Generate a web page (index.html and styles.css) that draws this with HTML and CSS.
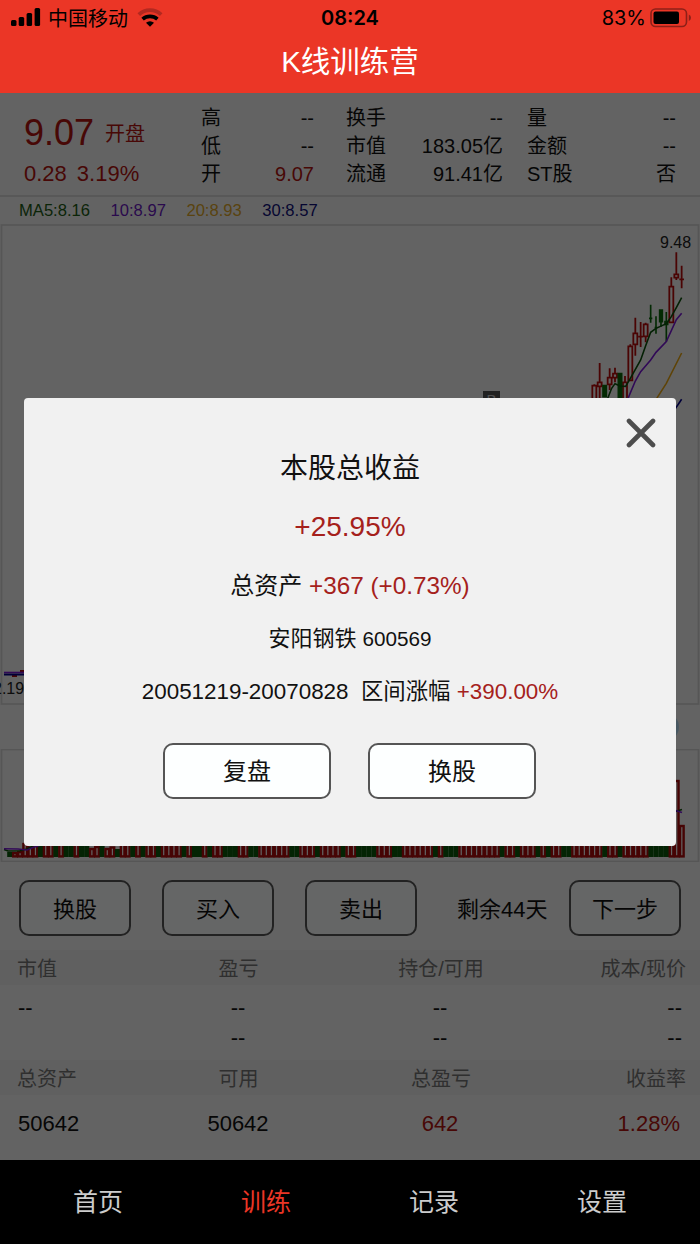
FILE: index.html
```html
<!DOCTYPE html>
<html lang="zh-CN">
<head>
    <meta charset="UTF-8">
    <title>K线训练营</title>
    <link rel="stylesheet" href="styles.css">
</head>
<body>
<div class="app">
    <div class="top">
        <div class="status">
            <div class="carrier">
                <svg width="30" height="20" viewBox="0 0 30 20">
                    <rect x="0" y="12" width="5.5" height="6" rx="1.5"/>
                    <rect x="7.7" y="9" width="5.5" height="9" rx="1.5"/>
                    <rect x="15.6" y="5" width="5.5" height="13" rx="1.5"/>
                    <rect x="23.6" y="0" width="5.5" height="18" rx="1.5"/>
                </svg>
                <span>中国移动</span>
                <svg class="wifi" width="26" height="20" viewBox="0 0 26 20">
                    <path d="M1.8 6.6A16.5 16.5 0 0 1 24.2 6.6" fill="none" stroke="#b32920" stroke-width="3.8"/>
                    <path d="M5.6 11.2A11 11 0 0 1 20.4 11.2" fill="none" stroke="#000" stroke-width="3.6"/>
                    <path d="M9 14.8A6 6 0 0 1 17 14.8L13 18.8Z"/>
                </svg>
            </div>
            <div class="time">08:24</div>
            <div class="power">
                <span>83%</span>
                <svg width="42" height="20" viewBox="0 0 42 20">
                    <rect x="1" y="1" width="35.5" height="17.5" rx="4.5" fill="none" stroke="#8d2018" stroke-width="1.6"/>
                    <rect x="3.5" y="3.5" width="25.5" height="12.5" rx="2"/>
                    <path d="M38.8 6.5Q41 7.5 41 9.8T38.8 13.1Z" fill="#8d2018"/>
                </svg>
            </div>
        </div>
        <h1>K线训练营</h1>
    </div>

    <div class="main">
        <div class="quote">
            <div class="price">
                <div class="now"><b>9.07</b><span>开盘</span></div>
                <div class="change"><span>0.28</span><span>3.19%</span></div>
            </div>
            <ul class="info info1">
                <li><span>高</span><i>--</i></li>
                <li><span>低</span><i>--</i></li>
                <li><span>开</span><i class="red">9.07</i></li>
            </ul>
            <ul class="info info2">
                <li><span>换手</span><i>--</i></li>
                <li><span>市值</span><i>183.05亿</i></li>
                <li><span>流通</span><i>91.41亿</i></li>
            </ul>
            <ul class="info info3">
                <li><span>量</span><i>--</i></li>
                <li><span>金额</span><i>--</i></li>
                <li><span>ST股</span><i>否</i></li>
            </ul>
        </div>
        <div class="ma">
            <span class="ma5">MA5:8.16</span>
            <span class="ma10">10:8.97</span>
            <span class="ma20">20:8.93</span>
            <span class="ma30">30:8.57</span>
        </div>

        <svg class="kline" width="700" height="481" viewBox="0 224 700 481">
            <rect class="frame" x="1.5" y="225" width="697" height="479"/>
            <text x="660" y="248">9.48</text>
            <text x="-7" y="694">2.19</text>
            <rect x="483" y="391" width="17" height="17" fill="#555"/>
            <text class="mark" x="486.5" y="405">B</text>
            <g transform="translate(560 225) scale(.3333)">
                <path class="up" d="M97 560V482H109V560M103 482V478
                    M113 472H125V484H113ZM119 414V472M119 484V520
                    M143 458H155V478H143ZM149 430V458M149 478V495
                    M159 446H171V458H159ZM165 428V446M165 458V472
                    M189 560V472H201V560M195 472V453
                    M205 364H217V466H205ZM211 364V358
                    M220 325H232V358H220ZM226 278V325M226 358V392
                    M235 335H249M242 291V366
                    M251 298H263V334H251ZM257 293V298M257 334V352
                    M328 185H340V292H328ZM334 157V185
                    M343 148H355V158H343ZM349 82V148M349 158V165
                    M358 163H372M365 122V190"/>
                <path class="down" d="M129 482H139V515H129ZM175 446H185V560H175ZM267 280H277M272 239V293
                    M284 308H292M288 274V326M299 255H307V290H299ZM303 290V305M315 290H323V298H315ZM319 261V350"/>
                <polyline class="l5" points="140,528 155,490 165,476 180,483 197,484 211,460 242,405 257,362 272,322 288,310 319,296 334,275 349,248 365,218"/>
                <polyline class="l10" points="200,530 226,468 242,440 272,405 288,382 319,350 349,284 365,265"/>
                <polyline class="l20" points="284,530 319,475 365,384"/>
                <polyline class="l30" points="340,560 365,523"/>
            </g>
            <path d="M12 676H17M20 671H26" stroke="#b01010" stroke-width="2"/>
            <path d="M4 674.5H30" stroke="#00008c" stroke-width="2"/>
            <path d="M4 672.5H30" stroke="#7a18d8" stroke-width="1.6"/>
        </svg>

        <div class="gap">
            <svg width="30" height="30" viewBox="0 0 30 30"><circle cx="15" cy="15" r="14" fill="#b4dcf6"/></svg>
        </div>

        <svg class="volume" width="700" height="113" viewBox="0 749 700 113">
            <rect class="frame" x="1.5" y="749.5" width="697" height="112"/>
            <g id="bars"></g>
            <polyline class="l5" points="4,849.5 8,851 20,850.8 27,849 40,842"/>
            <polyline class="l10" points="4,848.8 18,849 27,850 33,847.5 50,842"/>
            <path class="l5" d="M674 812L682 809.5"/>
            <path class="l10" d="M674 810L682 812.5"/>
        </svg>

        <div class="trade">
            <button>换股</button>
            <button>买入</button>
            <button>卖出</button>
            <span>剩余44天</span>
            <button>下一步</button>
        </div>

        <div class="row head"><span>市值</span><span>盈亏</span><span>持仓/可用</span><span>成本/现价</span></div>
        <div class="row"><span>--</span><span>--</span><span>--</span><span>--</span></div>
        <div class="row second"><span></span><span>--</span><span>--</span><span>--</span></div>
        <div class="row head head2"><span>总资产</span><span>可用</span><span>总盈亏</span><span>收益率</span></div>
        <div class="row total"><span>50642</span><span>50642</span><span class="red">642</span><span class="red">1.28%</span></div>
    </div>

    <ul class="nav">
        <li>首页</li>
        <li class="on">训练</li>
        <li>记录</li>
        <li>设置</li>
    </ul>

    <div class="mask"></div>
    <div class="dialog">
        <svg class="close" width="30" height="30" viewBox="0 0 30 30">
            <path d="M3 3L27 27M27 3L3 27" stroke="#4d4d4d" stroke-width="4.6" stroke-linecap="round"/>
        </svg>
        <h2>本股总收益</h2>
        <p class="rate">+25.95%</p>
        <p class="asset">总资产 <em>+367 (+0.73%)</em></p>
        <p class="stock">安阳钢铁 <span>600569</span></p>
        <p class="range">20051219-20070828&nbsp; 区间涨幅 <em>+390.00%</em></p>
        <div class="btns">
            <button>复盘</button>
            <button>换股</button>
        </div>
    </div>
</div>
<script src="volume.js"></script>
</body>
</html>
```
FILE: styles.css
```css
*{
    margin: 0;
    padding: 0;
    box-sizing: border-box;
}
body{
    font-family: "Liberation Sans", "Noto Sans CJK SC", sans-serif;
    color: #111;
    background: #000;
}
ul{
    list-style: none;
}
i, em{
    font-style: normal;
}
svg{
    display: block;
}
button{
    font-family: inherit;
    color: #111;
    background: #fdffff;
    border: solid 2px #555;
    border-radius: 10px;
    height: 56px;
    padding-bottom: 3px;
}
.app{
    position: relative;
    width: 700px;
    height: 1244px;
    overflow: hidden;
}
/* header */
.top{
    height: 93px;
    background: #eb3626;
}
.status{
    display: grid;
    grid-template-columns: 1fr 1fr 1fr;
    align-items: center;
    height: 36px;
    padding: 0 8px 0 11px;
    color: #000;
    font-size: 20px;
}
.carrier, .power{
    display: flex;
    align-items: center;
}
.carrier span{
    margin: 0 9px 0 7px;
    padding-bottom: 2px;
}
.time{
    font-family: Inter, sans-serif;
    font-weight: 600;
    font-size: 20px;
    text-align: center;
    padding-right: 3px;
}
.power{
    justify-content: flex-end;
    font-family: Inter, sans-serif;
    gap: 4px;
}
.top h1{
    color: #fff;
    font-size: 29.5px;
    font-weight: normal;
    line-height: 52px;
    text-align: center;
}
.main{
    height: 1067px;
    background: #f8f8f8;
}
/* quote */
.quote{
    display: flex;
    height: 104px;
    padding: 11px 0 0 24px;
    border-bottom: solid 2px #ddd;
}
.price{
    width: 177px;
    color: #b41410;
}
.now{
    display: flex;
    align-items: center;
    height: 57px;
}
.now b{
    font-size: 36px;
    font-weight: normal;
}
.now span{
    font-size: 20px;
    margin-left: 11px;
}
.change{
    display: flex;
    gap: 10px;
    font-size: 22px;
    line-height: 26px;
}
.info{
    font-size: 20px;
}
.info li{
    display: flex;
    justify-content: space-between;
    line-height: 28px;
}
.info1{
    width: 113px;
}
.info2{
    width: 157px;
    margin-left: 32px;
}
.info3{
    width: 149px;
    margin-left: 24px;
}
.red{
    color: #b41410;
}
.ma{
    display: flex;
    height: 27px;
    padding-left: 19px;
    font-size: 16.6px;
    line-height: 28px;
    gap: 20.5px;
}
.ma5{
    color: #1c5c14;
}
.ma10{
    color: #6a1ac0;
}
.ma20{
    color: #e0a828;
}
.ma30{
    color: #10107c;
}
/* charts */
.frame{
    fill: none;
    stroke: #d8d8d8;
    stroke-width: 1.8;
}
.kline text{
    font-size: 16px;
    fill: #222;
}
.kline .mark{
    font-size: 15px;
    fill: #ccc;
}
.up{
    fill: none;
    stroke: #b80c0c;
    stroke-width: 5.4;
}
.down{
    fill: #0a6a0a;
    stroke: #0a6a0a;
    stroke-width: 5;
}
.l5, .l10, .l20, .l30{
    fill: none;
    stroke-width: 1.6;
}
g .l5, g .l10, g .l20, g .l30{
    stroke-width: 4.8;
}
.l5{
    stroke: #0a520a;
}
.l10{
    stroke: #7a18d8;
}
.l20{
    stroke: #eaa814;
}
.l30{
    stroke: #00008c;
}
.gap{
    display: flex;
    justify-content: flex-end;
    align-items: center;
    height: 44px;
    padding-right: 20px;
}
.bar-up{
    fill: #f8f8f8;
    stroke: #ae0c0c;
    stroke-width: 2.4;
}
.bar-down{
    fill: #0a5a0a;
}
/* trade buttons */
.trade{
    display: flex;
    align-items: center;
    height: 88px;
    padding: 4px 19px 0;
    font-size: 22px;
}
.trade button{
    width: 112px;
    font-size: 22px;
    margin-right: 31px;
}
.trade span{
    flex: 1;
    margin-left: 9px;
    padding-bottom: 3px;
}
.trade button:last-child{
    margin-right: 0;
}
/* position table */
.row{
    display: grid;
    grid-template-columns: 119px 202px 202px 1fr;
    padding: 0 18px;
    height: 44px;
    line-height: 45px;
    font-size: 22px;
    text-align: center;
}
.row span:first-child{
    text-align: left;
}
.row span:last-child{
    text-align: right;
}
.row.head{
    height: 35px;
    line-height: 38px;
    padding: 0 14px 0 17px;
    grid-template-columns: 120px 203px 202px 1fr;
    font-size: 20px;
    color: #777;
    background: #f0f0f0;
}
.row.second{
    height: 31px;
    line-height: 17px;
}
.row.total{
    height: 64px;
    line-height: 58px;
    padding-right: 20px;
}
/* bottom nav */
.nav{
    display: flex;
    height: 84px;
    padding: 0 14px;
    background: #000;
}
.nav li{
    flex: 1;
    text-align: center;
    font-size: 25px;
    line-height: 84px;
    color: #ccc;
}
.nav .on{
    color: #eb3626;
}
/* dialog */
.mask{
    position: absolute;
    left: 0;
    top: 93px;
    width: 700px;
    height: 1067px;
    background: rgba(0, 0, 0, .6);
}
.dialog{
    position: absolute;
    left: 24px;
    top: 398px;
    width: 652px;
    height: 448px;
    padding-top: 42px;
    background: #f1f1f1;
    border-radius: 4px;
    text-align: center;
}
.close{
    position: absolute;
    right: 20px;
    top: 20px;
}
.dialog h2{
    font-size: 28px;
    font-weight: normal;
    line-height: 58px;
}
.dialog em, .rate{
    color: #a5211c;
}
.rate{
    font-size: 28px;
    line-height: 58px;
}
.asset{
    font-size: 24px;
    line-height: 60px;
}
.asset em{
    font-size: 24.3px;
}
.stock{
    font-size: 22px;
    line-height: 46px;
}
.stock span{
    font-size: 20.7px;
}
.range{
    font-size: 22.4px;
    line-height: 60px;
}
.btns{
    display: flex;
    justify-content: center;
    gap: 37px;
    margin-top: 21px;
    padding-right: 1px;
}
.btns button{
    width: 168px;
    font-size: 24px;
}
```
FILE: volume.js
```javascript
// r = up day, g = down day
var days = 'grrrrrgrrgrggrggrrgrrgrrgrgrrgrrrr' +
    'grggrgrrgggrrggrrrrrrggrrrgrrrrgrrggggrrrggrrrrrrgrgggrrrrrrrrgrrgrrrgrgrr' +
    'ggrrrrrrgrrgrrrrrggggrrr';
// top edge of the bars that are not cut by the default
var tops = {0: 852, 1: 853, 2: 852, 3: 844, 16: 849, 17: 847, 19: 849, 20: 847.5, 21: 849, 130: 781, 131: 826};
var oBars = document.getElementById('bars');
var step = 5.13;
for (var i = 0; i < days.length; i++) {
    var oRect = document.createElementNS('http://www.w3.org/2000/svg', 'rect');
    var up = days[i] == 'r';
    var top1 = tops[i] || 838;
    oRect.setAttribute('class', up ? 'bar-up' : 'bar-down');
    oRect.setAttribute('x', 7.2 + i * step + (up ? 0.8 : 0));
    oRect.setAttribute('y', top1);
    oRect.setAttribute('width', up ? 3.6 : step);
    oRect.setAttribute('height', 857 - top1 - (up ? 0.6 : 0));
    oBars.appendChild(oRect);
}
```
